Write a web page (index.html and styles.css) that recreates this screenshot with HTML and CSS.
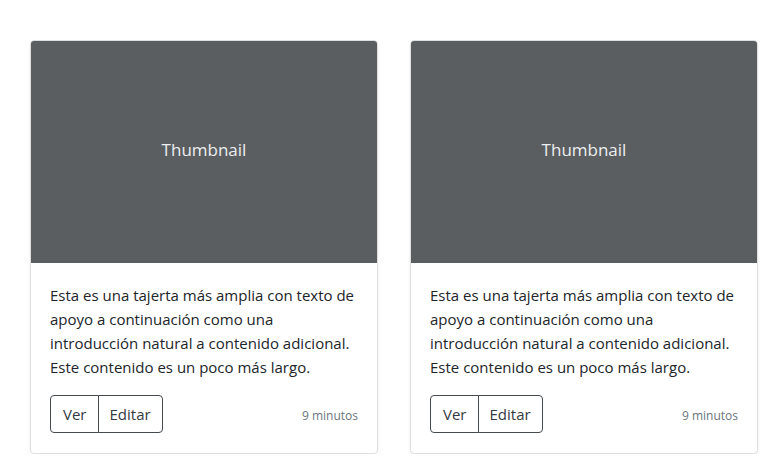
FILE: index.html
```html
<!DOCTYPE html>
<html lang="es">
<head>
<meta charset="utf-8">
<title>Álbum</title>
<link rel="stylesheet" href="styles.css">
</head>
<body>
<main class="album">
  <div class="grid">
    <div class="card">
      <div class="thumb"><span>Thumbnail</span></div>
      <div class="card-body">
        <p class="card-text">Esta es una tajerta más amplia con texto de apoyo a continuación como una introducción natural a contenido adicional. Este contenido es un poco más largo.</p>
        <div class="card-foot">
          <div class="btn-group">
            <button class="btn" type="button">Ver</button>
            <button class="btn" type="button">Editar</button>
          </div>
          <small class="time">9 minutos</small>
        </div>
      </div>
    </div>
    <div class="card">
      <div class="thumb"><span>Thumbnail</span></div>
      <div class="card-body">
        <p class="card-text">Esta es una tajerta más amplia con texto de apoyo a continuación como una introducción natural a contenido adicional. Este contenido es un poco más largo.</p>
        <div class="card-foot">
          <div class="btn-group">
            <button class="btn" type="button">Ver</button>
            <button class="btn" type="button">Editar</button>
          </div>
          <small class="time">9 minutos</small>
        </div>
      </div>
    </div>
  </div>
</main>
</body>
</html>
```
FILE: styles.css
```css
* { box-sizing: border-box; }
html, body { margin: 0; padding: 0; background: #fff; }
body {
  font-family: "Open Sans", "Noto Sans", "Liberation Sans", sans-serif;
  font-size: 15px;
  line-height: 24px;
  color: #212529;
}
.album { padding: 40px 0 0 30px; }
.grid {
  display: grid;
  grid-template-columns: 348px 348px;
  column-gap: 32px;
}
.card {
  border: 1px solid #dfdfdf;
  border-radius: 4px;
  box-shadow: 0 2px 4px rgba(0,0,0,.06);
  overflow: hidden;
  background: #fff;
}
.thumb {
  height: 222px;
  padding-bottom: 4px;
  background: #5b5e61;
  display: flex;
  align-items: center;
  justify-content: center;
  color: #eceeef;
  font-size: 17px;
}
.card-body { padding: 20px 19px 20px 19px; }
.card-text { margin: 0 0 16px 0; }
.card-foot {
  display: flex;
  align-items: center;
  justify-content: space-between;
}
.btn-group { display: flex; }
.btn {
  font-family: inherit;
  font-size: 15px;
  line-height: 24px;
  color: #343a40;
  background: #fff;
  border: 1px solid #454a4f;
  padding: 6px 11px;
  margin: 0;
}
.btn:first-child { border-radius: 4px 0 0 4px; padding-left: 12px; }
.btn:last-child { border-radius: 0 4px 4px 0; margin-left: -1px; }
.time { font-size: 12px; color: #6c757d; padding-top: 4px; }
```
